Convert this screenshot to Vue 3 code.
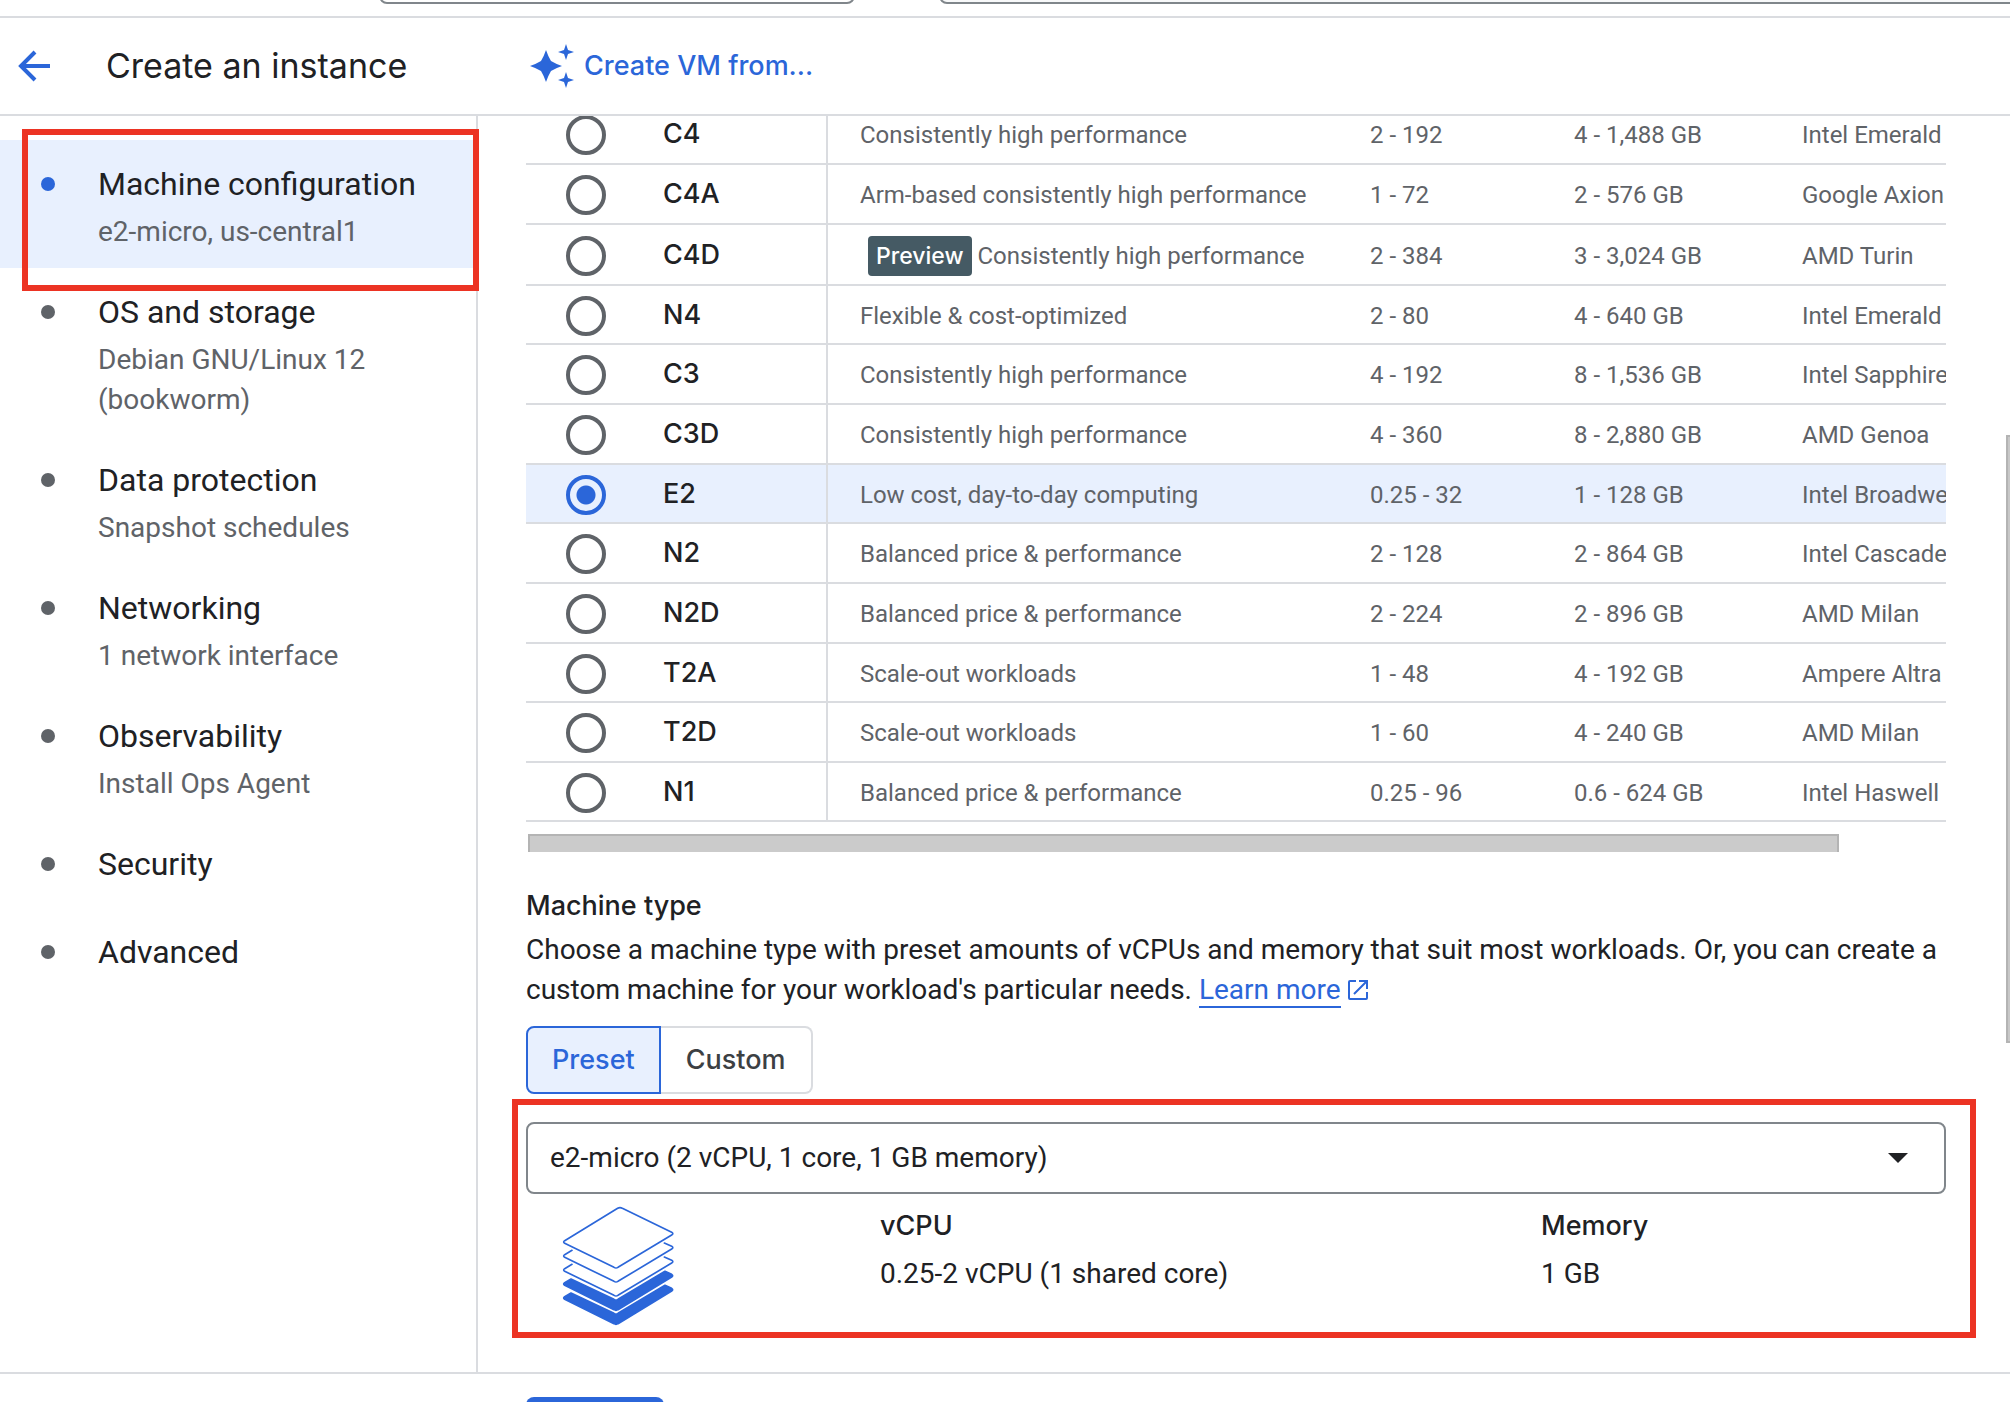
<script setup>
import { ref } from 'vue'

const steps = [
  { title: 'Machine configuration', note: 'e2-micro, us-central1' },
  { title: 'OS and storage', note: 'Debian GNU/Linux 12 (bookworm)' },
  { title: 'Data protection', note: 'Snapshot schedules' },
  { title: 'Networking', note: '1 network interface' },
  { title: 'Observability', note: 'Install Ops Agent' },
  { title: 'Security' },
  { title: 'Advanced' },
]
const activeStep = ref('Machine configuration')

const series = [
  { name: 'C4', text: 'Consistently high performance', vcpu: '2 - 192', memory: '4 - 1,488 GB', cpu: 'Intel Emerald Rapids' },
  { name: 'C4A', text: 'Arm-based consistently high performance', vcpu: '1 - 72', memory: '2 - 576 GB', cpu: 'Google Axion' },
  { name: 'C4D', text: 'Consistently high performance', badge: 'Preview', vcpu: '2 - 384', memory: '3 - 3,024 GB', cpu: 'AMD Turin' },
  { name: 'N4', text: 'Flexible & cost-optimized', vcpu: '2 - 80', memory: '4 - 640 GB', cpu: 'Intel Emerald Rapids' },
  { name: 'C3', text: 'Consistently high performance', vcpu: '4 - 192', memory: '8 - 1,536 GB', cpu: 'Intel Sapphire Rapids' },
  { name: 'C3D', text: 'Consistently high performance', vcpu: '4 - 360', memory: '8 - 2,880 GB', cpu: 'AMD Genoa' },
  { name: 'E2', text: 'Low cost, day-to-day computing', vcpu: '0.25 - 32', memory: '1 - 128 GB', cpu: 'Intel Broadwell' },
  { name: 'N2', text: 'Balanced price & performance', vcpu: '2 - 128', memory: '2 - 864 GB', cpu: 'Intel Cascade Lake' },
  { name: 'N2D', text: 'Balanced price & performance', vcpu: '2 - 224', memory: '2 - 896 GB', cpu: 'AMD Milan' },
  { name: 'T2A', text: 'Scale-out workloads', vcpu: '1 - 48', memory: '4 - 192 GB', cpu: 'Ampere Altra' },
  { name: 'T2D', text: 'Scale-out workloads', vcpu: '1 - 60', memory: '4 - 240 GB', cpu: 'AMD Milan' },
  { name: 'N1', text: 'Balanced price & performance', vcpu: '0.25 - 96', memory: '0.6 - 624 GB', cpu: 'Intel Haswell' },
]
const selectedSeries = ref('E2')
const mode = ref('Preset')
const machineType = ref('e2-micro')
</script>

<template>
  <div class="page">
    <div class="topbar">
      <button class="project" type="button" aria-label="Select a project"></button>
      <input class="search" type="search" aria-label="Search" />
    </div>

    <header class="header">
      <div class="heading">
        <a class="back" href="#" aria-label="Back">
          <svg width="32" height="32" viewBox="0 0 32 32" fill="none" stroke="currentColor" stroke-width="4">
            <path d="M17 2 3 16l14 14M4 16h28" />
          </svg>
        </a>
        <h1>Create an instance</h1>
      </div>
      <button class="create-from" type="button">
        <svg width="44" height="44" viewBox="0 0 44 44" fill="currentColor" aria-hidden="true">
          <path d="M16 6q2 6 5 11 5 3 11 5-6 2-11 5-3 5-5 11-2-6-5-11-5-3-11-5 6-2 11-5 3-5 5-11z" />
          <path d="M36 0l2 6 6 2-6 2-2 6-2-6-6-2 6-2z" />
          <path d="M36 28l2 6 6 2-6 2-2 6-2-6-6-2 6-2z" />
        </svg>
        Create VM from...
      </button>
    </header>

    <div class="body">
      <nav class="steps" aria-label="Instance configuration">
        <a
          v-for="step in steps"
          :key="step.title"
          href="#"
          class="step"
          :class="{ active: step.title === activeStep }"
          @click.prevent="activeStep = step.title"
        >
          <span class="dot"></span>
          <span class="step-text">
            <span class="step-title">{{ step.title }}</span>
            <span v-if="step.note" class="step-note">{{ step.note }}</span>
          </span>
        </a>
        <div class="callout callout-step"></div>
      </nav>

      <main class="content">
        <div class="scrolled">
          <div class="table-wrap">
            <table>
              <colgroup>
                <col class="c-radio" /><col class="c-name" /><col class="c-text" />
                <col class="c-vcpu" /><col class="c-memory" /><col class="c-cpu" />
              </colgroup>
              <tbody>
                <tr v-for="row in series" :key="row.name" :class="{ selected: row.name === selectedSeries }">
                  <td class="radio-cell">
                    <input :id="'series-' + row.name" v-model="selectedSeries" type="radio" name="series" :value="row.name" />
                  </td>
                  <td class="name"><label :for="'series-' + row.name">{{ row.name }}</label></td>
                  <td class="text">
                    <div class="text-line"><span v-if="row.badge" class="badge">{{ row.badge }}</span>{{ row.text }}</div>
                  </td>
                  <td>{{ row.vcpu }}</td>
                  <td>{{ row.memory }}</td>
                  <td>{{ row.cpu }}</td>
                </tr>
              </tbody>
            </table>
          </div>
          <div class="h-track"><div class="h-thumb"></div></div>

          <h2>Machine type</h2>
          <p class="intro">
            Choose a machine type with preset amounts of vCPUs and memory that suit most workloads. Or, you can create a
            custom machine for your workload's particular needs.
            <a class="learn" href="#"><span>Learn more</span><svg width="20" height="20" viewBox="0 0 20 20" fill="none" stroke="currentColor" stroke-width="2" aria-hidden="true">
              <path d="M8 1H2a1 1 0 0 0-1 1v16a1 1 0 0 0 1 1h16a1 1 0 0 0 1-1v-6M11 1h8v8M19 1 6 14" />
            </svg></a>
          </p>

          <div class="toggle">
            <button
              v-for="m in ['Preset', 'Custom']"
              :key="m"
              type="button"
              :class="{ on: m === mode }"
              :aria-pressed="m === mode"
              @click="mode = m"
            >{{ m }}</button>
          </div>

          <section class="machine">
            <div class="select-box">
              <select v-model="machineType" aria-label="Machine type">
                <option value="e2-micro">e2-micro (2 vCPU, 1 core, 1 GB memory)</option>
              </select>
              <svg class="caret" width="20" height="10" viewBox="0 0 20 10" aria-hidden="true"><path d="M0 0h20L10 10z" fill="#202124" /></svg>
            </div>
            <div class="specs">
              <div class="stack">
                <svg width="112" height="120" viewBox="186 228 336 360" fill="none" stroke="#2b66d9" stroke-width="5" stroke-linejoin="round" stroke-linecap="round" aria-hidden="true">
                  <path d="M353 235q7-4 14 0l148 72q7 4 0 8L354 412q-6 4-12 0L194 340q-6-4 0-8z" />
                  <path d="M216 361l-22 13q-6 4 0 8l148 72q6 4 12 0l161-97q7-4 0-8l-22-10" />
                  <path d="M216 403l-22 13q-6 4 0 8l148 72q6 4 12 0l161-97q7-4 0-8l-22-10" />
                  <path fill="#2b66d9" d="M213 447l-19 11q-6 4 0 8l148 73q6 4 12 0l161-98q6-4 0-8l-20-9-141 84q-6 4-12 0z" />
                  <path fill="#2b66d9" d="M213 489l-19 11q-6 4 0 8l148 73q6 4 12 0l161-98q6-4 0-8l-20-9-141 84q-6 4-12 0z" />
                </svg>
              </div>
              <div class="spec spec-cpu"><h3>vCPU</h3><p>0.25-2 vCPU (1 shared core)</p></div>
              <div class="spec"><h3>Memory</h3><p>1 GB</p></div>
            </div>
            <div class="callout callout-machine"></div>
          </section>
        </div>
        <div class="v-thumb"></div>
      </main>
    </div>

    <footer class="footer">
      <button class="submit" type="button" aria-label="Create"></button>
    </footer>
  </div>
</template>

<style>
body {
  margin: 0;
  background: #fff;
}
</style>

<style scoped>
.page {
  display: flex;
  flex-direction: column;
  height: 100vh;
  overflow: hidden;
  font: 28px/40px Roboto, "Liberation Sans", sans-serif;
  color: #202124;
}
.page *, .page *::before { box-sizing: border-box; }
h1, h2, h3, p { margin: 0; }
a { color: #2b66d9; text-decoration: none; }
button {
  font: 500 27px/40px Inter, "Liberation Sans", sans-serif;
  color: inherit;
  background: none;
  border: 0;
  padding: 0;
  cursor: pointer;
}

.topbar {
  display: flex;
  align-items: flex-end;
  flex: none;
  height: 18px;
  padding: 0 0 12px 379px;
  gap: 84px;
  border-bottom: 2px solid #dadce0;
  overflow: hidden;
}
.project, .search {
  height: 64px;
  border: 2px solid #80868b;
  border-radius: 8px;
  flex: none;
}
.project { width: 476px; }
.search {
  flex: 1;
  margin-right: -20px;
  background: #f8f9fa;
  appearance: none;
}

.header {
  display: flex;
  flex: none;
  height: 98px;
  align-items: center;
  border-bottom: 2px solid #dadce0;
}
.heading {
  display: flex;
  align-items: center;
  flex: none;
  width: 530px;
  padding-left: 18px;
  gap: 56px;
}
.back { display: flex; }
h1 { font: 400 34px/48px Inter, "Liberation Sans", sans-serif; }
.create-from {
  display: flex;
  align-items: center;
  gap: 10px;
  color: #2b66d9;
}

.body {
  display: flex;
  flex: 1;
  min-height: 0;
}
.steps {
  position: relative;
  z-index: 1;
  flex: none;
  width: 478px;
  padding-top: 24px;
  border-right: 2px solid #dadce0;
}
.step {
  display: flex;
  gap: 43px;
  padding: 24px 48px 16px 41px;
  color: #5f6368;
}
.step.active { background: #e8f0fe; }
.dot {
  flex: none;
  width: 14px;
  height: 14px;
  margin-top: 13px;
  border-radius: 50%;
  background: #5f6368;
}
.step.active .dot { background: #2b66d9; }
.step-title {
  display: block;
  margin-bottom: 8px;
  font-size: 32px;
  color: #202124;
}
.step-note { display: block; }

.callout {
  position: absolute;
  border: 6px solid #ec3323;
  pointer-events: none;
}
.callout-step { inset: 13px -3px auto 22px; height: 162px; }
.callout-machine { inset: -23px -30px -20px -14px; }

.content {
  position: relative;
  flex: 1;
  min-width: 0;
  overflow: hidden;
}
.scrolled {
  margin-top: -11px;
  padding: 0 64px 0 48px;
}
.table-wrap { overflow: hidden; }
table {
  width: 1538px;
  table-layout: fixed;
  border-collapse: separate;
  border-spacing: 0;
  font-size: 24px;
  color: #5f6368;
}
.c-radio { width: 105px; }
.c-name { width: 197px; }
.c-text { width: 510px; }
.c-vcpu { width: 204px; }
.c-memory { width: 228px; }
td {
  height: 60px;
  padding: 2px 0 0 32px;
  border-bottom: 2px solid #dadce0;
  white-space: nowrap;
  vertical-align: middle;
}
tr:nth-child(3n + 1) td, tr:last-child td { height: 59px; }
tr:first-child td { height: 60px; }
tr:nth-child(3) td { height: 61px; }
tr.selected { background: #e8f0fe; }
.radio-cell { padding-left: 40px; }
.radio-cell input {
  display: block;
  appearance: none;
  width: 40px;
  height: 40px;
  margin: 0;
  border: 4px solid #5f6368;
  border-radius: 50%;
}
.radio-cell input:checked {
  border-color: #2b66d9;
  background: radial-gradient(circle, #2b66d9 0 9px, transparent 10px);
}
.name {
  padding-top: 0;
  border-right: 2px solid #dadce0;
  font: 500 27px/40px Inter, "Liberation Sans", sans-serif;
  color: #202124;
}
.text-line { display: flex; align-items: center; }
.badge {
  margin: 0 6px 0 8px;
  padding: 0 8px;
  border-radius: 4px;
  background: #455a64;
  color: #fff;
  font: 500 23px/40px Inter, "Liberation Sans", sans-serif;
}
.h-track { padding: 12px 0 0 2px; }
.h-thumb {
  width: 1311px;
  max-width: 93%;
  height: 18px;
  background: #cbcbcb;
  border: 2px solid #b4b4b4;
  border-bottom: 0;
}
.v-thumb {
  position: absolute;
  top: 319px;
  right: 0;
  width: 4px;
  height: 608px;
  background: #c8c8c8;
  border: 2px solid #b4b4b4;
  border-right: 0;
}

h2, h3 { font: 500 27px/40px Inter, "Liberation Sans", sans-serif; }
h2 { margin: 34px 0 4px; }
.learn span { border-bottom: 2px solid currentColor; }
.learn svg { margin-left: 7px; vertical-align: -1px; }

.toggle { display: flex; margin-top: 16px; }
.toggle button {
  height: 68px;
  padding: 0 24px;
  border: 2px solid #dadce0;
  color: #3c4043;
}
.toggle button:first-child { border-radius: 8px 0 0 8px; }
.toggle button:last-child {
  padding: 0 25px;
  border-left: 0;
  border-radius: 0 8px 8px 0;
}
.toggle button.on {
  border: 2px solid #2b66d9;
  background: #e8f0fe;
  color: #2b66d9;
}

.machine { position: relative; margin-top: 28px; }
.select-box { position: relative; }
select {
  display: block;
  width: 100%;
  height: 72px;
  padding: 0 72px 0 22px;
  appearance: none;
  border: 2px solid #80868b;
  border-radius: 8px;
  background: #fff;
  color: #202124;
  font: 28px/40px Roboto, "Liberation Sans", sans-serif;
}
.caret {
  position: absolute;
  top: 31px;
  right: 38px;
  pointer-events: none;
}
.specs {
  display: flex;
  padding-top: 12px;
}
.stack {
  width: 354px;
  height: 112px;
  padding-left: 36px;
}
.stack svg { display: block; }
.spec-cpu { width: 661px; }
.spec p { margin-top: 8px; }

.footer {
  flex: none;
  height: 30px;
  padding: 23px 0 0 526px;
  border-top: 2px solid #dadce0;
  overflow: hidden;
}
.submit {
  display: block;
  width: 138px;
  height: 72px;
  border-radius: 8px;
  background: #2b66d9;
}
</style>
